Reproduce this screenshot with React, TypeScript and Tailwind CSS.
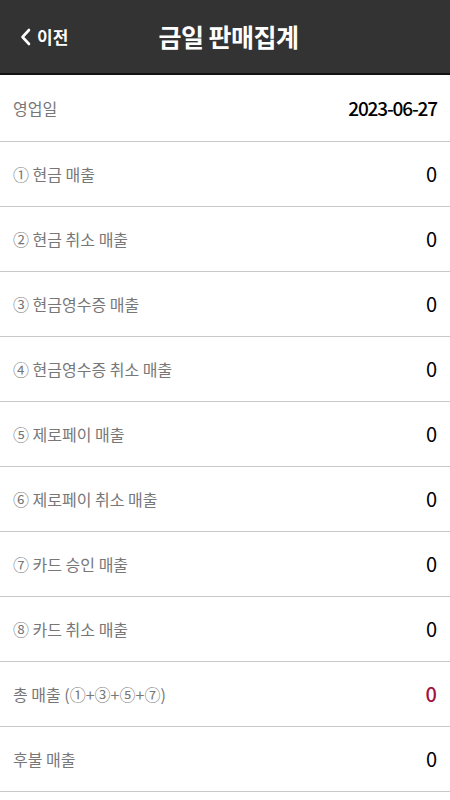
import React from 'react';

type Row = { label: string; value: string; red?: boolean };

const rows: Row[] = [
  { label: '① 현금 매출', value: '0' },
  { label: '② 현금 취소 매출', value: '0' },
  { label: '③ 현금영수증 매출', value: '0' },
  { label: '④ 현금영수증 취소 매출', value: '0' },
  { label: '⑤ 제로페이 매출', value: '0' },
  { label: '⑥ 제로페이 취소 매출', value: '0' },
  { label: '⑦ 카드 승인 매출', value: '0' },
  { label: '⑧ 카드 취소 매출', value: '0' },
  { label: '총 매출 (①+③+⑤+⑦)', value: '0', red: true },
  { label: '후불 매출', value: '0' },
];

const App: React.FC = () => {
  return (
    <div
      className="min-h-screen bg-white"
      style={{ fontFamily: '"Noto Sans CJK KR", "Noto Sans", sans-serif' }}
    >
      {/* Header */}
      <div className="relative h-[75px] bg-[#333333] border-b-2 border-[#111] flex items-center justify-center">
        <button className="absolute left-[20px] top-[24px] flex items-center gap-[6px] text-white text-[17px] font-bold">
          <svg width="11" height="18" viewBox="0 0 11 18" fill="none">
            <path d="M9 2L2.5 9L9 16" stroke="white" strokeWidth="2.6" strokeLinecap="round" strokeLinejoin="round" />
          </svg>
          이전
        </button>
        <h1 className="ml-[7px] text-white text-[25px] font-bold tracking-[-0.02em]">금일 판매집계</h1>
      </div>

      {/* 영업일 */}
      <div className="h-[67px] flex items-center justify-between px-[13px] border-b border-[#c8c8c8]">
        <span className="text-[16px] text-[#777]">영업일</span>
        <span className="text-[19px] text-black font-medium tracking-[-0.06em]">2023-06-27</span>
      </div>

      {rows.map((r) => (
        <div
          key={r.label}
          className="h-[65px] flex items-center justify-between px-[13px] border-b border-[#c8c8c8]"
        >
          <span className="text-[16px] text-[#777]">{r.label}</span>
          <span className={`text-[20px] ${r.red ? 'text-[#a3123c] font-medium' : 'text-black'}`}>
            {r.value}
          </span>
        </div>
      ))}
    </div>
  );
};

export default App;
